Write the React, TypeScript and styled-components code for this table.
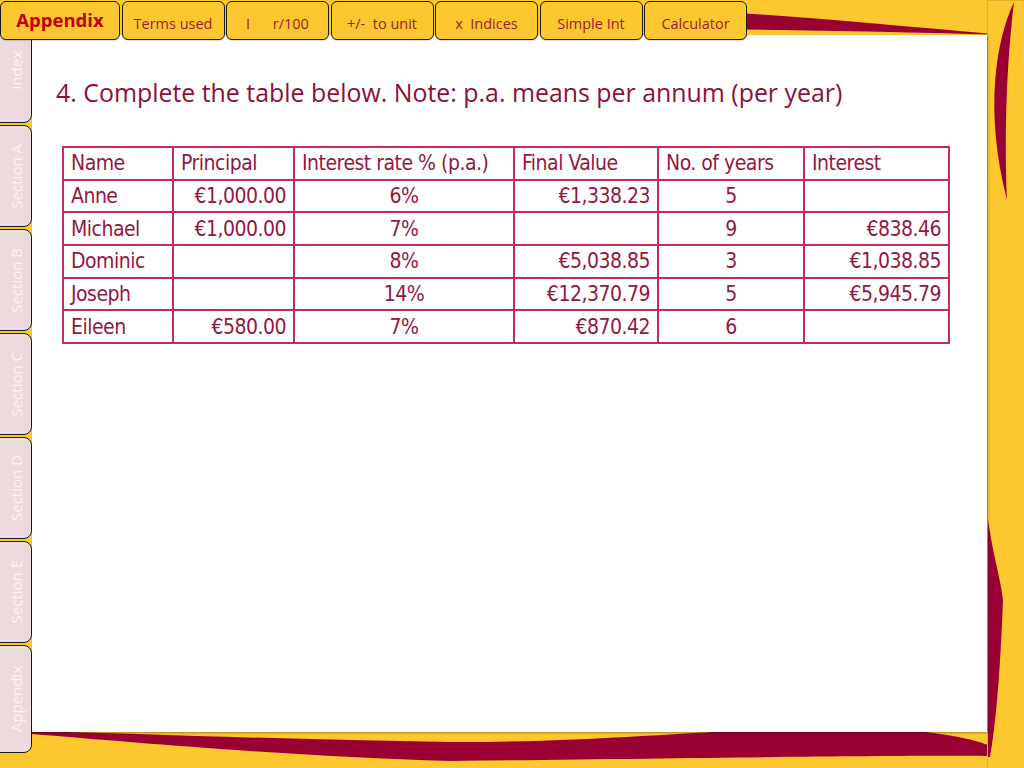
import React from 'react';
import styled, { createGlobalStyle } from 'styled-components';

const Global = createGlobalStyle`
  html, body { margin: 0; padding: 0; background: #FDC82F; }
  body { width: 1024px; height: 768px; overflow: hidden; font-family: "Open Sans", sans-serif; }
`;

const Stage = styled.div`
  position: relative;
  width: 1024px;
  height: 768px;
  display: grid;
  grid-template-columns: 32px 955px 1fr;
  grid-template-rows: 35px 697px 1fr;
  background: #FDC82F;
  overflow: hidden;
`;

const Backdrop = styled.svg`
  position: absolute;
  left: 0;
  top: 0;
  width: 1024px;
  height: 768px;
  z-index: 0;
`;

const TopBar = styled.nav`
  grid-column: 1 / 4;
  grid-row: 1;
  display: flex;
  gap: 1.5px;
  align-items: flex-start;
  padding-top: 1px;
  position: relative;
  z-index: 3;
  height: 35px;
  box-sizing: border-box;
`;

const TopTab = styled.div<{ $w: number; $main?: boolean }>`
  flex: 0 0 ${(p) => p.$w}px;
  height: 39px;
  box-sizing: border-box;
  background: #FDC82F;
  border: 1.5px solid #1b1b1b;
  border-radius: 6px;
  display: flex;
  align-items: center;
  justify-content: center;
  font-family: "Open Sans", sans-serif;
  font-size: ${(p) => (p.$main ? 18.5 : 14.5)}px;
  font-weight: ${(p) => (p.$main ? 700 : 400)};
  color: ${(p) => (p.$main ? '#C00000' : '#9B1B30')};
  white-space: pre;
  padding-top: ${(p) => (p.$main ? 0 : 5)}px;
  padding-bottom: ${(p) => (p.$main ? 2 : 0)}px;
  box-shadow: 0 1px 1px rgba(0, 0, 0, 0.15);
`;

const SideBar = styled.aside`
  grid-column: 1;
  grid-row: 2 / 4;
  margin-top: -17px;
  display: flex;
  flex-direction: column;
  gap: 2px;
  position: relative;
  z-index: 2;
`;

const SideTab = styled.div<{ $h: number }>`
  height: ${(p) => p.$h}px;
  width: 36px;
  margin-left: -4px;
  box-sizing: border-box;
  background: #EBD9DC;
  border: 1.5px solid #1b1b1b;
  border-radius: 0 8px 8px 0;
  display: flex;
  align-items: center;
  justify-content: center;
  padding-left: 4px;
`;

const SideLabel = styled.span`
  writing-mode: vertical-rl;
  transform: rotate(180deg);
  white-space: nowrap;
  font-family: "Open Sans", sans-serif;
  font-size: 15px;
  color: #FAF3F4;
`;

const Panel = styled.main`
  grid-column: 2;
  grid-row: 2;
  background: #ffffff;
  position: relative;
  z-index: 1;
  box-shadow: 1px 1px 2px rgba(0, 0, 0, 0.35);
  padding: 41px 0 0 24px;
  box-sizing: border-box;
`;

const Heading = styled.h1`
  margin: 0;
  font-family: "Open Sans", sans-serif;
  font-weight: 400;
  font-size: 24.9px;
  line-height: 32px;
  color: #8E0F3A;
  white-space: nowrap;
`;

const Table = styled.table`
  margin: 38px 0 0 6px;
  border-collapse: collapse;
  border: 2px solid #C92A5C;
  table-layout: fixed;
  width: 886px;
`;

const Cell = styled.td<{ $align?: 'left' | 'right' | 'center' }>`
  border: 2px solid #C92A5C;
  height: 30.7px;
  padding: 0 7px;
  text-align: ${(p) => p.$align || 'left'};
  vertical-align: middle;
  font-family: "Liberation Sans Narrow", "DejaVu Sans Condensed", "Roboto", sans-serif;
  font-size: 21px;
  letter-spacing: -0.5px;
  color: #93183F;
  white-space: nowrap;
  overflow: hidden;
`;

const cols = [110, 121, 220, 144, 146, 145];
const aligns: ('left' | 'right' | 'center')[] = ['left', 'right', 'center', 'right', 'center', 'right'];
const header = ['Name', 'Principal', 'Interest rate % (p.a.)', 'Final Value', 'No. of years', 'Interest'];
const rows = [
  ['Anne', '€1,000.00', '6%', '€1,338.23', '5', ''],
  ['Michael', '€1,000.00', '7%', '', '9', '€838.46'],
  ['Dominic', '', '8%', '€5,038.85', '3', '€1,038.85'],
  ['Joseph', '', '14%', '€12,370.79', '5', '€5,945.79'],
  ['Eileen', '€580.00', '7%', '€870.42', '6', ''],
];

const topTabs: { label: string; w: number; main?: boolean }[] = [
  { label: 'Appendix', w: 120, main: true },
  { label: 'Terms used', w: 103 },
  { label: 'I      r/100', w: 103 },
  { label: '+/-  to unit', w: 103 },
  { label: 'x  Indices', w: 103 },
  { label: 'Simple Int', w: 103 },
  { label: 'Calculator', w: 103 },
];

const sideTabs: { label: string; h: number }[] = [
  { label: 'Index', h: 105 },
  { label: 'Section A', h: 102 },
  { label: 'Section B', h: 102 },
  { label: 'Section C', h: 102 },
  { label: 'Section D', h: 102 },
  { label: 'Section E', h: 102 },
  { label: 'Appendix', h: 108 },
];

export default function App() {
  return (
    <>
      <Global />
      <Stage>
        <Backdrop viewBox="0 0 1024 768">
          <rect x="0" y="0" width="1024" height="768" fill="#FDC82F" />
          <path d="M 690 10 C 800 16, 900 26, 988 33.5 L 988 34.5 C 900 32, 800 30, 690 29 Z" fill="#990033" />
          <path d="M 1014 2 C 996 40, 984 110, 1007 200 C 1004 130, 1007 60, 1014 2 Z" fill="#990033" />
          <path d="M 32 731 C 150 734, 300 740, 450 742 C 600 743, 750 726, 850 727 C 930 729, 970 738, 988 745 L 989 756 C 900 755, 700 758, 450 761 C 300 757, 130 742, 32 734 Z" fill="#990033" />
          <path d="M 988 520 C 994 560, 1001 580, 1003 600 C 1000 680, 995 730, 990 757 L 988 757 Z" fill="#990033" />
          <line x1="987.5" y1="0" x2="987.5" y2="768" stroke="#E4B22B" strokeWidth="1" />
          <line x1="987" y1="0.5" x2="1024" y2="0.5" stroke="#E4B22B" strokeWidth="1" />
        </Backdrop>
        <TopBar>
          {topTabs.map((t) => (
            <TopTab key={t.label} $w={t.w} $main={t.main}>
              {t.label}
            </TopTab>
          ))}
        </TopBar>
        <SideBar>
          {sideTabs.map((t) => (
            <SideTab key={t.label} $h={t.h}>
              <SideLabel>{t.label}</SideLabel>
            </SideTab>
          ))}
        </SideBar>
        <Panel>
          <Heading>4. Complete the table below. Note: p.a. means per annum (per year)</Heading>
          <Table>
            <colgroup>
              {cols.map((w, i) => (
                <col key={i} style={{ width: w }} />
              ))}
            </colgroup>
            <tbody>
              <tr>
                {header.map((h) => (
                  <Cell key={h}>{h}</Cell>
                ))}
              </tr>
              {rows.map((r) => (
                <tr key={r[0]}>
                  {r.map((c, i) => (
                    <Cell key={i} $align={aligns[i]}>
                      {c}
                    </Cell>
                  ))}
                </tr>
              ))}
            </tbody>
          </Table>
        </Panel>
      </Stage>
    </>
  );
}
